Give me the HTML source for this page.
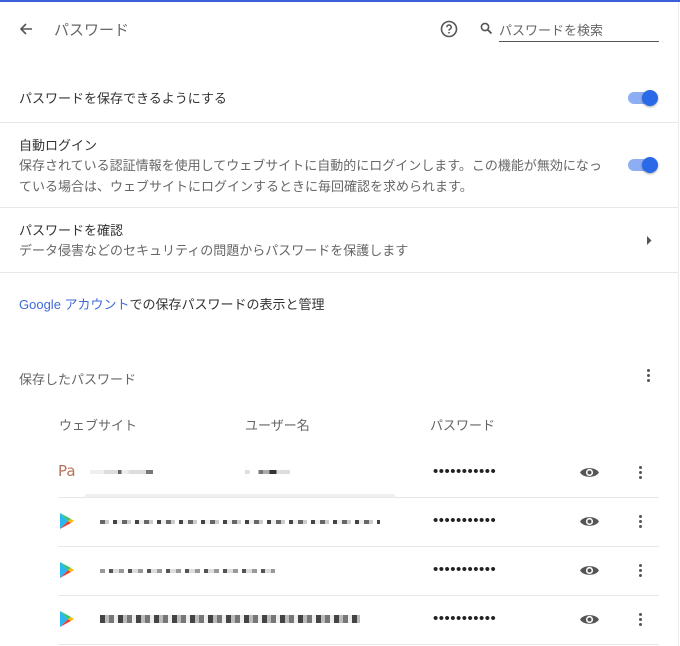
<!DOCTYPE html>
<html><head><meta charset="utf-8"><style>
*{margin:0;padding:0;box-sizing:border-box}
body{width:680px;height:646px;overflow:hidden;background:#fff;font-family:"Liberation Sans","Noto Sans CJK JP",sans-serif;color:#333;font-size:13px;position:relative}
.a{position:absolute;white-space:nowrap}
.hr{position:absolute;height:1px;background:#e8e8e8}
.g{color:#666}
.tog{position:absolute;width:30px;height:20px}
.tog .t{position:absolute;left:0;top:4px;width:28px;height:12px;border-radius:6px;background:#8eaef3}
.tog .k{position:absolute;left:14px;top:2px;width:16px;height:16px;border-radius:50%;background:#2a6ae8;box-shadow:0 1px 2px rgba(0,0,0,.35)}
.dots{position:absolute;width:4px}
.dots i{display:block;width:3px;height:3px;border-radius:50%;background:#555;margin-bottom:2px}
.pw{position:absolute;left:433px;font-size:15px;letter-spacing:0.5px;color:#222}
.bl{position:absolute;height:4px}
</style></head><body>
<div style="position:absolute;left:0;top:0;width:680px;height:2px;background:#3b5fd6"></div>
<div style="position:absolute;right:1px;top:2px;width:1px;height:644px;background:#ececec"></div>

<svg class="a" style="left:18px;top:21px" width="16" height="16" viewBox="0 0 16 16"><path d="M14 8H3M8 3L3 8l5 5" stroke="#555" stroke-width="1.6" fill="none"/></svg>
<div class="a g" style="left:54px;top:19px;font-size:15px">パスワード</div>
<svg class="a" style="left:440px;top:20px" width="18" height="18" viewBox="0 0 18 18"><circle cx="9" cy="9" r="7.5" stroke="#555" stroke-width="1.6" fill="none"/><path d="M6.8 7.2a2.2 2.2 0 1 1 3 2c-.6.3-.8.7-.8 1.4" stroke="#555" stroke-width="1.5" fill="none"/><circle cx="9" cy="12.8" r=".9" fill="#555"/></svg>
<svg class="a" style="left:480px;top:22px" width="13" height="13" viewBox="0 0 13 13"><circle cx="5" cy="5" r="3.6" stroke="#555" stroke-width="1.6" fill="none"/><path d="M7.6 7.6L11.5 11.5" stroke="#555" stroke-width="1.8"/></svg>
<div class="a g" style="left:499px;top:20px">パスワードを検索</div>
<div style="position:absolute;left:499px;top:41px;width:160px;height:1px;background:#555"></div>

<div class="a" style="left:19px;top:88px">パスワードを保存できるようにする</div>
<div class="tog" style="left:628px;top:88px"><div class="t"></div><div class="k"></div></div>
<div class="hr" style="left:0;top:122px;width:678px"></div>

<div class="a" style="left:19px;top:135px">自動ログイン</div>
<div class="a g" style="left:19px;top:155px">保存されている認証情報を使用してウェブサイトに自動的にログインします。この機能が無効になっ</div>
<div class="a g" style="left:19px;top:176px">ている場合は、ウェブサイトにログインするときに毎回確認を求められます。</div>
<div class="tog" style="left:628px;top:155px"><div class="t"></div><div class="k"></div></div>
<div class="hr" style="left:0;top:207px;width:678px"></div>

<div class="a" style="left:19px;top:220px">パスワードを確認</div>
<div class="a g" style="left:19px;top:240px">データ侵害などのセキュリティの問題からパスワードを保護します</div>
<svg class="a" style="left:647px;top:236px" width="5" height="9"><path d="M0 0L4.5 4.5L0 9z" fill="#555"/></svg>
<div class="hr" style="left:0;top:272px;width:678px"></div>

<div class="a" style="left:19px;top:294px"><span style="color:#3f6ad8">Google アカウント</span>での保存パスワードの表示と管理</div>

<div class="a g" style="left:19px;top:369px">保存したパスワード</div>
<div class="dots" style="left:647px;top:369px"><i></i><i></i><i></i></div>

<div class="a g" style="left:59px;top:415px">ウェブサイト</div>
<div class="a g" style="left:245px;top:415px">ユーザー名</div>
<div class="a g" style="left:430px;top:415px">パスワード</div>

<div class="a" style="left:58px;top:462px;color:#b5735a;font-size:15px;font-family:'DejaVu Sans',sans-serif">Pa</div>
<div class="bl" style="left:90px;top:470px;width:70px;background:linear-gradient(90deg,#eee 0 20%,#ddd 20% 40%,#666 40% 45%,#eee 45% 55%,#ddd 55% 80%,#777 80% 90%,#fff 90%)"></div>
<div class="bl" style="left:245px;top:470px;width:45px;background:linear-gradient(90deg,#ddd 0 10%,#fff 10% 30%,#777 30% 40%,#aaa 40% 55%,#333 55% 70%,#ddd 70%)"></div>
<div style="position:absolute;left:85px;top:494px;width:310px;height:4px;background:#f0f0f0"></div>

<svg class="a" style="left:59px;top:512px" width="16" height="18" viewBox="0 0 16 18"><path d="M1 1L9 9L1 17z" fill="#2ab7f0"/><path d="M1 1L12 7L9 9z" fill="#3ac46a"/><path d="M1 17L12 11L9 9z" fill="#ea4335"/><path d="M12 7L15 9L12 11L9 9z" fill="#fbbc05"/></svg>
<div class="bl" style="left:100px;top:520px;width:280px;background:repeating-linear-gradient(90deg,#666 0 5px,#ccc 5px 9px,#fff 9px 13px,#444 13px 17px,#eee 17px 22px)"></div>
<svg class="a" style="left:59px;top:561px" width="16" height="18" viewBox="0 0 16 18"><path d="M1 1L9 9L1 17z" fill="#2ab7f0"/><path d="M1 1L12 7L9 9z" fill="#3ac46a"/><path d="M1 17L12 11L9 9z" fill="#ea4335"/><path d="M12 7L15 9L12 11L9 9z" fill="#fbbc05"/></svg>
<div class="bl" style="left:100px;top:569px;width:175px;background:repeating-linear-gradient(90deg,#999 0 5px,#fff 5px 9px,#555 9px 13px,#ddd 13px 19px)"></div>
<svg class="a" style="left:59px;top:610px" width="16" height="18" viewBox="0 0 16 18"><path d="M1 1L9 9L1 17z" fill="#2ab7f0"/><path d="M1 1L12 7L9 9z" fill="#3ac46a"/><path d="M1 17L12 11L9 9z" fill="#ea4335"/><path d="M12 7L15 9L12 11L9 9z" fill="#fbbc05"/></svg>
<div class="bl" style="left:100px;top:615px;width:260px;height:8px;background:repeating-linear-gradient(90deg,#444 0 5px,#bbb 5px 9px,#777 9px 14px,#eee 14px 18px)"></div>

<div class="pw" style="top:463px">•••••••••••</div>
<div class="pw" style="top:512px">•••••••••••</div>
<div class="pw" style="top:561px">•••••••••••</div>
<div class="pw" style="top:610px">•••••••••••</div>

<svg class="a" style="left:579px;top:465px" width="21" height="15" viewBox="0 0 20 14"><path d="M1 7C4 1.5 16 1.5 19 7C16 12.5 4 12.5 1 7z" fill="#555"/><circle cx="10" cy="7" r="3.4" fill="#fff"/><circle cx="10" cy="7" r="1.9" fill="#555"/></svg>
<svg class="a" style="left:579px;top:514px" width="21" height="15" viewBox="0 0 20 14"><path d="M1 7C4 1.5 16 1.5 19 7C16 12.5 4 12.5 1 7z" fill="#555"/><circle cx="10" cy="7" r="3.4" fill="#fff"/><circle cx="10" cy="7" r="1.9" fill="#555"/></svg>
<svg class="a" style="left:579px;top:563px" width="21" height="15" viewBox="0 0 20 14"><path d="M1 7C4 1.5 16 1.5 19 7C16 12.5 4 12.5 1 7z" fill="#555"/><circle cx="10" cy="7" r="3.4" fill="#fff"/><circle cx="10" cy="7" r="1.9" fill="#555"/></svg>
<svg class="a" style="left:579px;top:612px" width="21" height="15" viewBox="0 0 20 14"><path d="M1 7C4 1.5 16 1.5 19 7C16 12.5 4 12.5 1 7z" fill="#555"/><circle cx="10" cy="7" r="3.4" fill="#fff"/><circle cx="10" cy="7" r="1.9" fill="#555"/></svg>

<div class="dots" style="left:639px;top:466px"><i></i><i></i><i></i></div>
<div class="dots" style="left:639px;top:515px"><i></i><i></i><i></i></div>
<div class="dots" style="left:639px;top:564px"><i></i><i></i><i></i></div>
<div class="dots" style="left:639px;top:613px"><i></i><i></i><i></i></div>

<div class="hr" style="left:58px;top:497px;width:601px"></div>
<div class="hr" style="left:58px;top:546px;width:601px"></div>
<div class="hr" style="left:58px;top:595px;width:601px"></div>
<div class="hr" style="left:58px;top:644px;width:601px"></div>
</body></html>
